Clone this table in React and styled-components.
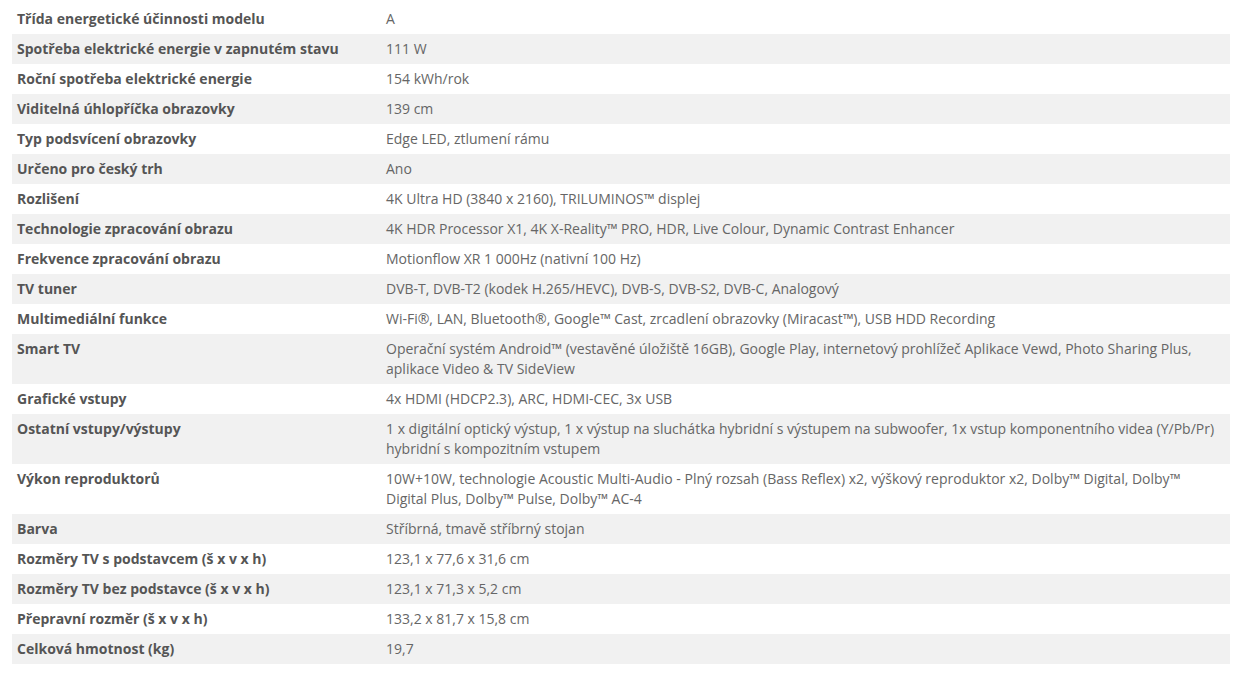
import React from "react";
import styled, { createGlobalStyle } from "styled-components";

const Global = createGlobalStyle`
  html, body { margin: 0; padding: 0; background: #fff; }
  body { font-family: "Open Sans", "Noto Sans", sans-serif; }
`;

const Wrap = styled.div`
  padding: 4px 14px 0 12px;
`;

const Table = styled.table`
  width: 100%;
  border-collapse: collapse;
  border-spacing: 0;
  font-size: 14px;
  line-height: 20px;
`;

const Row = styled.tr`
  background: ${(p) => (p.$alt ? "#f1f1f1" : "#fff")};
`;

const Label = styled.td`
  width: 359px;
  padding: 5px 5px 5px 5px;
  font-weight: 700;
  color: #555;
  vertical-align: top;
`;

const Value = styled.td`
  padding: 5px 5px 5px 5px;
  color: #666;
  vertical-align: top;
`;

const data = [
  ["Třída energetické účinnosti modelu", "A"],
  ["Spotřeba elektrické energie v zapnutém stavu", "111 W"],
  ["Roční spotřeba elektrické energie", "154 kWh/rok"],
  ["Viditelná úhlopříčka obrazovky", "139 cm"],
  ["Typ podsvícení obrazovky", "Edge LED, ztlumení rámu"],
  ["Určeno pro český trh", "Ano"],
  ["Rozlišení", "4K Ultra HD (3840 x 2160), TRILUMINOS™ displej"],
  ["Technologie zpracování obrazu", "4K HDR Processor X1, 4K X-Reality™ PRO, HDR, Live Colour, Dynamic Contrast Enhancer"],
  ["Frekvence zpracování obrazu", "Motionflow XR 1 000Hz (nativní 100 Hz)"],
  ["TV tuner", "DVB-T, DVB-T2 (kodek H.265/HEVC), DVB-S, DVB-S2, DVB-C, Analogový"],
  ["Multimediální funkce", "Wi-Fi®, LAN, Bluetooth®, Google™ Cast, zrcadlení obrazovky (Miracast™), USB HDD Recording"],
  ["Smart TV", "Operační systém Android™ (vestavěné úložiště 16GB), Google Play, internetový prohlížeč Aplikace Vewd, Photo Sharing Plus, aplikace Video & TV SideView"],
  ["Grafické vstupy", "4x HDMI (HDCP2.3), ARC, HDMI-CEC, 3x USB"],
  ["Ostatní vstupy/výstupy", "1 x digitální optický výstup, 1 x výstup na sluchátka hybridní s výstupem na subwoofer, 1x vstup komponentního videa (Y/Pb/Pr) hybridní s kompozitním vstupem"],
  ["Výkon reproduktorů", "10W+10W, technologie Acoustic Multi-Audio - Plný rozsah (Bass Reflex) x2, výškový reproduktor x2, Dolby™ Digital, Dolby™ Digital Plus, Dolby™ Pulse, Dolby™ AC-4"],
  ["Barva", "Stříbrná, tmavě stříbrný stojan"],
  ["Rozměry TV s podstavcem (š x v x h)", "123,1 x 77,6 x 31,6 cm"],
  ["Rozměry TV bez podstavce (š x v x h)", "123,1 x 71,3 x 5,2 cm"],
  ["Přepravní rozměr (š x v x h)", "133,2 x 81,7 x 15,8 cm"],
  ["Celková hmotnost (kg)", "19,7"],
];

export default function App() {
  return (
    <Wrap>
      <Global />
      <Table>
        <tbody>
          {data.map(([k, v], i) => (
            <Row key={k} $alt={i % 2 === 1}>
              <Label>{k}</Label>
              <Value>{v}</Value>
            </Row>
          ))}
        </tbody>
      </Table>
    </Wrap>
  );
}
